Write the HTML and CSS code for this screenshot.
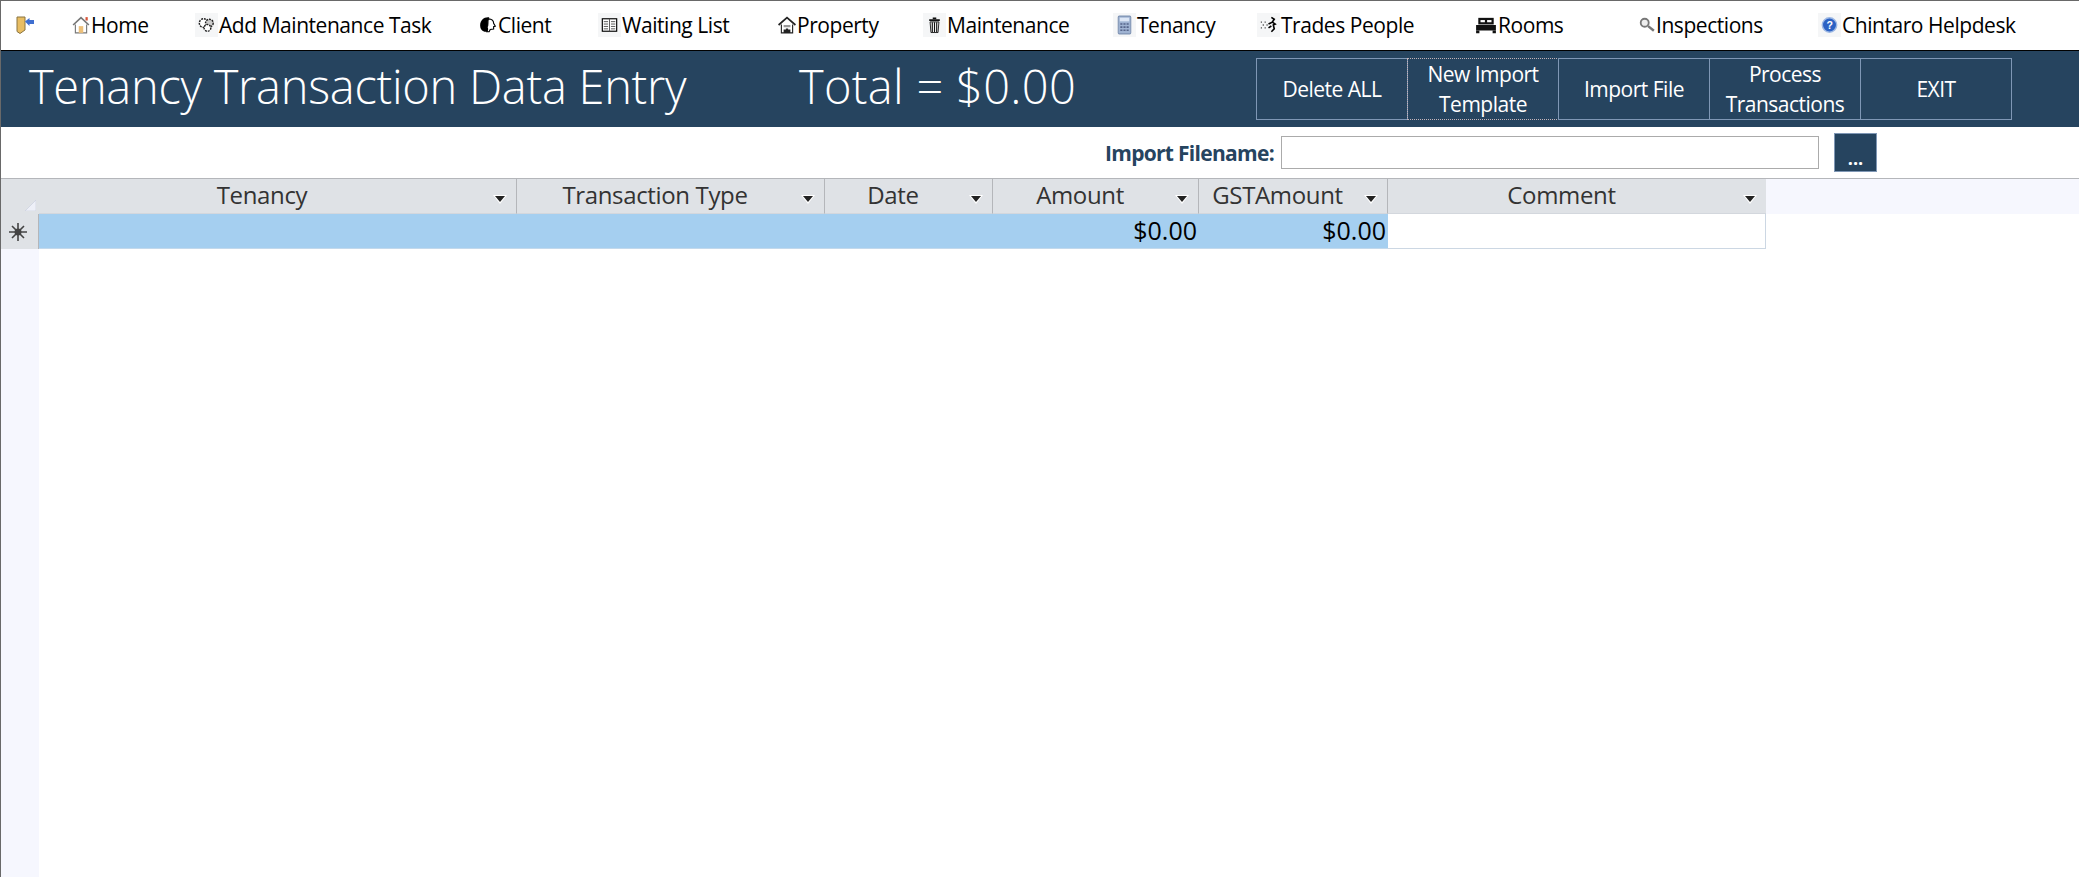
FILE: index.html
```html
<!DOCTYPE html>
<html lang="en">
<head>
<meta charset="utf-8">
<title>Tenancy Transaction Data Entry</title>
<link rel="stylesheet" href="styles.css">
</head>
<body>
<div class="app">
  <nav class="nav">
    <a class="nav-item"><svg class="ico" viewBox="0 0 18 18"><path d="M1 1h8v13l-5 3.500-3-2z" fill="#e8bd62" stroke="#8a7440"/><path d="M9 5.500l4.500-3.500v2H18v4h-4.500v2z" fill="#3f6fd0"/></svg></a>
    <a class="nav-item"><svg class="ico" viewBox="0 0 16 16"><path d="M1 8l7-6.500 7 6.500" fill="none" stroke="#777" stroke-width="1.500"/><path d="M3 7.500V15h10V7.500" fill="#fff" stroke="#777"/><rect x="6" y="9" width="4" height="6" fill="#edc07a"/><rect x="12" y="1" width="2" height="3" fill="#d8553a"/></svg><span>Home</span></a>
    <a class="nav-item"><svg class="ico bg-soft" viewBox="-2 -2 24 24"><circle cx="7" cy="8" r="4.500" fill="#fff" stroke="#222" stroke-width="1.500" stroke-dasharray="2 1"/><circle cx="13" cy="8" r="4" fill="#ccc" stroke="#222" stroke-width="1.500" stroke-dasharray="2 1"/><circle cx="11" cy="13" r="3.500" fill="#fff" stroke="#222" stroke-width="1.500" stroke-dasharray="2 1"/></svg><span>Add Maintenance Task</span></a>
    <a class="nav-item"><svg class="ico" viewBox="0 0 16 16"><path d="M8 1C4 1 1 4 1 8s2 6 5 6h3V1z" fill="#000"/><path d="M8.500 2.500c3 0 4.500 2 4.500 4l1.500 2.500-1.500.5v2l-3 .5-1 2H7c1-2 1-3 0-4 2-1 0-5 1.500-7.500z" fill="#fff" stroke="#000"/></svg><span>Client</span></a>
    <a class="nav-item"><svg class="ico bg-soft" viewBox="-2 -2 24 24"><rect x="2.500" y="3.500" width="15" height="13" fill="#fff" stroke="#000" stroke-width="1.200"/><path d="M10 3.500v13M4 6.500h4.500M4 9h4.500M4 11.500h4.500M4 14h4.500M11.500 6.500H16M11.500 9H16M11.500 11.500H16M11.500 14H16" stroke="#555"/></svg><span>Waiting List</span></a>
    <a class="nav-item"><svg class="ico" viewBox="0 0 16 16"><path d="M0.500 8L8 1.500 15.500 8" fill="none" stroke="#222" stroke-width="1.500"/><path d="M3 7.500V15h10V7.500" fill="#fff" stroke="#222"/><path d="M5 8h6v2H5z" fill="#999"/><path d="M5 15v-3h2v-1h2v1h2v3z" fill="#222"/></svg><span>Property</span></a>
    <a class="nav-item"><svg class="ico bg-soft" viewBox="-3 -3 26 26"><rect x="4" y="3.500" width="12" height="2" fill="#111"/><rect x="8" y="1.500" width="4" height="2" fill="#111"/><path d="M5 6.500h10l-1 12H6z" fill="#fff" stroke="#111"/><path d="M7.500 7v11M10 7v11M12.500 7v11" stroke="#111" stroke-width="1.300"/></svg><span>Maintenance</span></a>
    <a class="nav-item"><svg class="ico bg-soft" viewBox="-1 -1 22 22"><rect x="4" y="1.500" width="12" height="17" rx="1" fill="#9fb3d2" stroke="#7f93b3"/><rect x="5.500" y="3" width="9" height="3.500" fill="#dce6f5"/><path d="M6 9h2M9 9h2M12 9h2M6 12h2M9 12h2M12 12h2M6 15h2M9 15h2M12 15h2" stroke="#56658a" stroke-width="1.500"/></svg><span>Tenancy</span></a>
    <a class="nav-item"><svg class="ico bg-soft" viewBox="-2 -2 24 24"><path d="M2 7h2M6 7h2M4 10h2M8 10h1M2 13h2M6 13h1" stroke="#222" stroke-width="1.500" stroke-dasharray="1 1"/><path d="M13 2l3 2-2 3 3 2-2 1 1 4-3 3M14 7l-4 2M13 11l-3 2" fill="none" stroke="#000" stroke-width="1.700"/></svg><span>Trades People</span></a>
    <a class="nav-item"><svg class="ico wide" viewBox="0 0 20 16"><rect x="3" y="1.500" width="14" height="6" fill="#111"/><rect x="5" y="3.500" width="4" height="2" fill="#fff"/><rect x="11" y="3.500" width="4" height="2" fill="#fff"/><rect x="1" y="8" width="18" height="5" fill="#111"/><rect x="1" y="13" width="3" height="2.500" fill="#111"/><rect x="16" y="13" width="3" height="2.500" fill="#111"/></svg><span>Rooms</span></a>
    <a class="nav-item"><svg class="ico small" viewBox="0 0 14 14"><circle cx="5" cy="5" r="3.500" fill="#eee" stroke="#777" stroke-width="1.600"/><path d="M8 8l5 4" stroke="#777" stroke-width="2.200"/></svg><span>Inspections</span></a>
    <a class="nav-item"><svg class="ico bg-soft" viewBox="-2 -2 24 24"><circle cx="10" cy="10" r="7.500" fill="#2c62c4" stroke="#9db8e4" stroke-width="1.500"/><text class="help-q" x="10" y="14" text-anchor="middle">?</text></svg><span>Chintaro Helpdesk</span></a>
  </nav>

  <header class="banner">
    <h1 class="title">Tenancy Transaction Data Entry</h1>
    <div class="total">Total = $0.00</div>
    <div class="actions">
      <button class="action">Delete ALL</button>
      <button class="action focused">New Import<br>Template</button>
      <button class="action">Import File</button>
      <button class="action">Process<br>Transactions</button>
      <button class="action">EXIT</button>
    </div>
  </header>

  <div class="import-row">
    <label class="import-label">Import Filename:</label>
    <div class="import-input"></div>
    <button class="browse">...</button>
  </div>

  <div class="sheet">
    <div class="selectors">
      <div class="corner"><svg class="corner-mark" viewBox="0 0 10 10"><path d="M10 0v10H0z" fill="#eef0f8" stroke="#c9cede" stroke-width="0.600"/></svg></div>
      <div class="row-sel"><svg class="star" viewBox="0 0 18 18"><path d="M9 0v18M0 9h18M3 3l12 12M15 3L3 15" stroke="#444" stroke-width="1.600"/><circle cx="9" cy="9" r="3.500" fill="#444"/></svg></div>
      <div class="sel-rest"></div>
    </div>
    <div class="grid">
      <div class="head-row">
        <div class="th c-tenancy"><span>Tenancy</span><i class="arrow"></i></div>
        <div class="th c-type"><span>Transaction Type</span><i class="arrow"></i></div>
        <div class="th c-date"><span>Date</span><i class="arrow"></i></div>
        <div class="th c-amount"><span>Amount</span><i class="arrow"></i></div>
        <div class="th c-gst"><span>GSTAmount</span><i class="arrow"></i></div>
        <div class="th c-comment"><span>Comment</span><i class="arrow"></i></div>
        <div class="th-rest"></div>
      </div>
      <div class="data-row">
        <div class="td sel c-tenancy"></div>
        <div class="td sel c-type"></div>
        <div class="td sel c-date"></div>
        <div class="td sel num c-amount">$0.00</div>
        <div class="td sel num c-gst">$0.00</div>
        <div class="td blank c-comment"></div>
      </div>
    </div>
  </div>
</div>
</body>
</html>
```
FILE: styles.css
```css
* { box-sizing: border-box; }
html, body { margin: 0; height: 100%; background: #fff; overflow: hidden; }
body { font-family: "Open Sans", "Noto Sans", "Liberation Sans", sans-serif; color: #000; }

.app {
  width: 2079px; height: 877px;
  border-top: 1px solid #696969;
  border-left: 1px solid #696969;
  display: flex; flex-direction: column;
}

/* top navigation */
.nav {
  height: 49px; flex: none;
  display: grid;
  grid-template-columns: 56px 123px 284px 119px 180px 145px 190px 144px 218px 164px 179px 1fr;
  padding-left: 15px;
  align-items: center;
}
.nav-item { display: flex; align-items: center; gap: 1px; font-size: 21px; letter-spacing: -0.45px; white-space: nowrap; padding-bottom: 2px; }
.ico { width: 18px; height: 18px; flex: none; }
.ico.wide { width: 22px; }
.ico.small { width: 16px; height: 16px; }
.bg-soft { background: #f5f6f7; width: 23px; height: 24px; }
.help-q { font: bold 11px "Liberation Sans", sans-serif; fill: #fff; }

/* banner */
.banner {
  height: 77px; flex: none;
  border-top: 1px solid #000;
  background: #26445f;
  color: #fff;
  display: flex; align-items: center;
  padding-left: 28px;
}
.title { margin: 0; width: 770px; flex: none; font-size: 47px; font-weight: 300; letter-spacing: -0.28px; white-space: nowrap; padding-bottom: 6px; }
.total { width: 456px; flex: none; font-size: 47px; font-weight: 300; letter-spacing: 0.3px; white-space: nowrap; padding-bottom: 6px; }
.actions { display: flex; margin-left: 1px; }
.action {
  width: 152px; height: 62px;
  margin-right: -1px;
  background: transparent;
  border: 1px solid #7f97b5;
  color: #fff;
  font: 400 21px/30px "Open Sans", sans-serif;
  letter-spacing: -0.5px;
  padding: 0;
}
.action.focused { border: 1px dotted #c4b4ba; }

/* import row */
.import-row {
  height: 51px; flex: none;
  display: flex; align-items: center;
  padding-left: 1085px;
}
.import-label { width: 188px; flex: none; text-align: right; font-size: 21px; font-weight: 700; color: #26445f; letter-spacing: -0.7px; white-space: nowrap; }
.import-input { width: 538px; height: 33px; margin-left: 7px; border: 1px solid #ababab; background: #fff; }
.browse {
  width: 43px; height: 39px; margin-left: 15px;
  background: #26445f; border: 1px solid #7f97b5;
  color: #fff; font: 700 18px/1 "Open Sans", sans-serif; padding: 11px 0 0;
}

/* datasheet */
.sheet { flex: 1; display: flex; border-top: 1px solid #b4b6ba; min-height: 0; }
.selectors { width: 38px; flex: none; display: flex; flex-direction: column; }
.corner { height: 35px; background: #dfe2e6; position: relative; }
.corner-mark { position: absolute; right: 3px; bottom: 3px; width: 11px; height: 11px; }
.row-sel { height: 35px; background: #dfe2e6; display: flex; align-items: center; justify-content: center; padding-right: 3px; border-right: 1px solid #b4b6ba; }
.star { width: 18px; height: 18px; }
.sel-rest { flex: 1; background: #f6f7fe; }

.grid { flex: 1; min-width: 0; }
.head-row, .data-row { display: flex; }
.head-row { height: 35px; }
.data-row { height: 35px; }
.c-tenancy { width: 478px; }
.c-type { width: 308px; }
.c-date { width: 168px; }
.c-amount { width: 206px; }
.c-gst { width: 189px; }
.c-comment { width: 378px; }
.th {
  position: relative;
  background: #dfe2e6;
  border-right: 1px solid #b4b6ba;
  border-bottom: 1px solid #d3d7dd;
  color: #333;
  font-size: 24px; letter-spacing: -0.35px;
  display: flex; align-items: center; justify-content: center;
  padding-right: 31px; padding-bottom: 3px;
  white-space: nowrap;
}
.th.c-comment { border-right: none; }
.th-rest { flex: 1; background: #f6f7fe; }
.arrow {
  position: absolute; right: 9px; top: 16px;
  width: 0; height: 0;
  border-left: 7px solid transparent; border-right: 7px solid transparent;
  border-top: 9px solid #fff;
}
.arrow::after {
  content: "";
  position: absolute; left: -5px; top: -8px;
  width: 0; height: 0;
  border-left: 5px solid transparent; border-right: 5px solid transparent;
  border-top: 6px solid #222;
}
.td { height: 35px; font-size: 25px; }
.td.sel { background: #a5cff0; border-bottom: 1px solid #c3d9ec; }
.td.num { text-align: right; padding-right: 2px; line-height: 33px; }
.td.blank { background: #fff; border-right: 1px solid #ccd7e3; border-bottom: 1px solid #ccd7e3; }
```
